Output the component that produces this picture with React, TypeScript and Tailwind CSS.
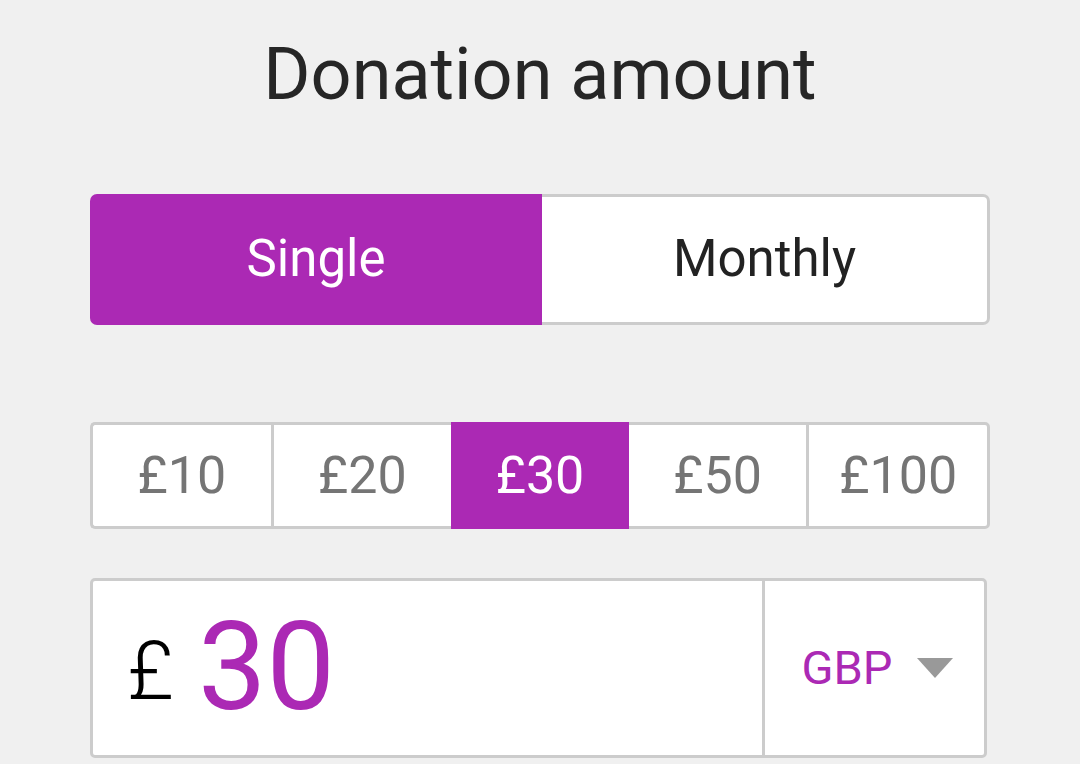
const amounts = [10, 20, 30, 50, 100]

function AmountButton({
  value,
  selected,
  first,
  last,
  afterSelected,
}: {
  value: number
  selected: boolean
  first: boolean
  last: boolean
  afterSelected: boolean
}) {
  if (selected) {
    return (
      <button className="flex flex-1 items-center justify-center bg-[#ab29b4] text-[52px] text-white">
        £{value}
      </button>
    )
  }
  return (
    <button
      className={[
        'flex flex-1 items-center justify-center border-y-[3px] border-[#cccccc] bg-white text-[52px] text-[#757575]',
        afterSelected ? '' : 'border-l-[3px]',
        first ? 'rounded-l-[5px]' : '',
        last ? 'rounded-r-[5px] border-r-[3px]' : '',
      ].join(' ')}
    >
      £{value}
    </button>
  )
}

export default function App() {
  const selected = 30

  return (
    <div className="min-h-[764px] bg-[#f0f0f0] font-['Roboto',sans-serif]">
      <div className="mx-[90px] flex flex-col pt-[32px]">
        <h1 className="text-center text-[72px] leading-[86px] text-[#262626]">
          Donation amount
        </h1>

        <div className="mt-[76px] flex h-[131px]">
          <button className="flex w-[452px] items-center justify-center rounded-l-[7px] bg-[#ab29b4] text-[51px] text-white">
            Single
          </button>
          <button className="flex flex-1 items-center justify-center rounded-r-[7px] border-[3px] border-l-0 border-[#cccccc] bg-white text-[51px] text-[#222222]">
            Monthly
          </button>
        </div>

        <div className="mt-[97px] flex h-[107px]">
          {amounts.map((a, i) => (
            <AmountButton
              key={a}
              value={a}
              selected={a === selected}
              first={i === 0}
              last={i === amounts.length - 1}
              afterSelected={i > 0 && amounts[i - 1] === selected}
            />
          ))}
        </div>

        <div className="mt-[49px] mr-[3px] flex h-[180px] rounded-[5px] border-[3px] border-[#cccccc] bg-white">
          <div className="flex flex-1 items-center pl-[34px]">
            <span className="mt-[6px] text-[82px] font-light text-black">£</span>
            <span className="ml-[24px] text-[122px] leading-none text-[#ab29b4]">
              {selected}
            </span>
          </div>
          <div className="flex w-[222px] items-center justify-center gap-[25px] border-l-[3px] border-[#cccccc] pl-[6px]">
            <span className="text-[47px] text-[#ab29b4]">GBP</span>
            <svg width="36" height="20" viewBox="0 0 36 20">
              <polygon points="0,0 36,0 18,20" fill="#999999" />
            </svg>
          </div>
        </div>
      </div>
    </div>
  )
}
